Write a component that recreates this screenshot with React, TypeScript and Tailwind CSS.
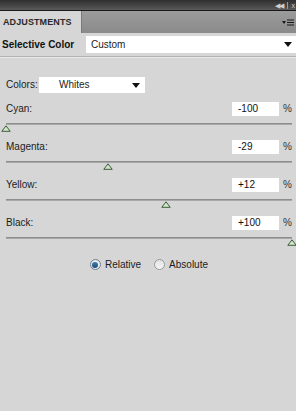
import React from "react";

const font = { fontFamily: '"Liberation Sans", Arial, sans-serif' };

const sliders = [
  { label: "Cyan:", value: -100, text: "-100" },
  { label: "Magenta:", value: -29, text: "-29" },
  { label: "Yellow:", value: 12, text: "+12" },
  { label: "Black:", value: 100, text: "+100" },
];

function Arrow() {
  return (
    <svg width="8" height="5" viewBox="0 0 8 5">
      <path d="M0 0 L8 0 L4 5 Z" fill="#111" />
    </svg>
  );
}

function Thumb() {
  return (
    <svg width="10" height="7" viewBox="0 0 10 7">
      <path d="M5 0.8 L9.2 6.3 L0.8 6.3 Z" fill="#cfe8c8" stroke="#3f5a3c" strokeWidth="1" strokeLinejoin="round" />
    </svg>
  );
}

function SliderBlock({ label, value, text }: { label: string; value: number; text: string }) {
  const pos = ((value + 100) / 200) * 286;
  return (
    <div className="flex flex-col h-[38px]">
      <div className="flex items-center h-[14px] pl-[6px]">
        <span className="text-[10px] text-[#1c1c1c] flex-1 leading-none">{label}</span>
        <div className="w-[47px] h-[14px] bg-white flex items-center pl-[6px] text-[10px] text-[#111] leading-none">
          {text}
        </div>
        <span className="w-[17px] pl-[4px] text-[10px] text-[#333] leading-none">%</span>
      </div>
      <div className="relative mt-[7px] ml-[6px] w-[286px] h-[2px] bg-[#8d8d8d] border-b border-[#a8a8a8]">
        <div className="absolute top-[2px]" style={{ left: pos - 5 }}>
          <Thumb />
        </div>
      </div>
    </div>
  );
}

export default function App() {
  return (
    <div className="w-[296px] h-[411px] bg-[#d6d6d6] flex flex-col overflow-hidden" style={font}>
      {/* top bar */}
      <div className="h-[11px] bg-gradient-to-b from-[#2f2f2f] to-[#5a5a5a] border-b border-[#1a1a1a] flex items-center justify-end pr-[1px] gap-[4px]">
        <span className="text-[7px] leading-none text-[#cfcfcf] tracking-[-1px]">◀◀</span>
        <span className="w-[1px] h-[7px] bg-[#9a9a9a]" />
        <span className="text-[7px] leading-none text-[#cfcfcf]">x</span>
      </div>
      {/* tab row */}
      <div className="h-[22px] flex">
        <div className="w-[81px] bg-[#d6d6d6] flex items-center pl-[3px]">
          <span className="text-[9px] font-bold text-[#2a2a2a] leading-none tracking-[0.1px]">ADJUSTMENTS</span>
        </div>
        <div className="flex-1 bg-gradient-to-b from-[#9c9c9c] to-[#8a8a8a] border-l border-[#7a7a7a] flex items-center justify-end pr-[2px]">
          <svg width="12" height="7" viewBox="0 0 12 7">
            <path d="M0 2 L4 2 L2 5 Z" fill="#1a1a1a" />
            <rect x="5" y="0.5" width="7" height="1" fill="#1a1a1a" />
            <rect x="5" y="3" width="7" height="1" fill="#1a1a1a" />
            <rect x="5" y="5.5" width="7" height="1" fill="#1a1a1a" />
          </svg>
        </div>
      </div>
      {/* selective color row */}
      <div className="h-[24px] flex items-center border-b border-[#b4b4b4]">
        <span className="w-[86px] pl-[2px] text-[10px] font-bold text-[#111] leading-none">Selective Color</span>
        <div className="flex-1 h-[17px] bg-white flex items-center justify-between pl-[5px] pr-[4px]">
          <span className="text-[10px] text-[#222] leading-none">Custom</span>
          <Arrow />
        </div>
      </div>
      <div className="h-[1px] bg-[#e8e8e8]" />
      {/* colors row */}
      <div className="mt-[19px] flex items-center h-[16px] pl-[6px]">
        <span className="w-[33px] text-[10px] text-[#1c1c1c] leading-none">Colors:</span>
        <div className="w-[106px] h-[16px] bg-white flex items-center justify-between pl-[20px] pr-[5px]">
          <span className="text-[10px] text-[#222] leading-none">Whites</span>
          <Arrow />
        </div>
      </div>
      {/* sliders */}
      <div className="mt-[9px] flex flex-col">
        {sliders.map((s) => (
          <SliderBlock key={s.label} {...s} />
        ))}
      </div>
      {/* radios */}
      <div className="mt-[5px] flex items-center justify-center gap-[13px] pl-[2px]">
        <div className="flex items-center gap-[4px]">
          <div className="w-[11px] h-[11px] rounded-full border border-[#6f7f8c] bg-[#e6eaee] flex items-center justify-center">
            <div className="w-[6px] h-[6px] rounded-full bg-gradient-to-b from-[#3f7fae] to-[#1c4e78]" />
          </div>
          <span className="text-[10px] text-[#1c1c1c] leading-none">Relative</span>
        </div>
        <div className="flex items-center gap-[4px]">
          <div className="w-[11px] h-[11px] rounded-full border border-[#9a9a9a] bg-gradient-to-b from-[#e2e2e2] to-[#f6f6f6]" />
          <span className="text-[10px] text-[#1c1c1c] leading-none">Absolute</span>
        </div>
      </div>
    </div>
  );
}
